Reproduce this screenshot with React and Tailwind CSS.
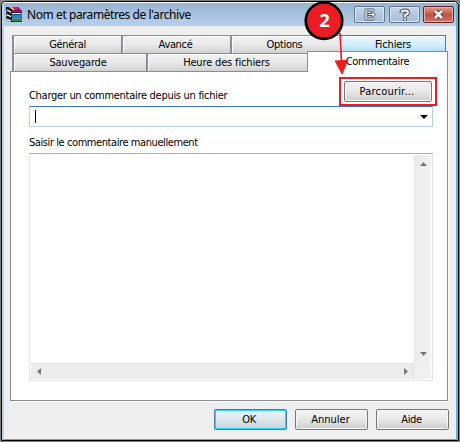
import React from "react";

const face = "border border-[#777] rounded-[2px] bg-linear-to-b from-[#f3f3f3] via-[#e7e7e7] via-50% to-[#cecece] shadow-[inset_0_0_0_1px_#f7f7f7]";
const tab = "flex items-center justify-center border-l-2 border-t border-[#8b8c96] bg-linear-to-b from-[#f2f2f2] via-[#e9e9e9] to-[#d2d2d2] shadow-[inset_1px_1px_0_#fff] shrink-0";
const caption = "flex h-[17px] items-center justify-center rounded-[2px] border border-[#63758f] shadow-[inset_0_0_0_1px_#dce7f4] bg-linear-to-b from-[#c3d4e8] via-[#b4c8e0] via-45% to-[#a7bed9]";

function Books() {
  return (
    <svg width="17" height="17" viewBox="0 0 17 17" className="mt-px shrink-0">
      <path d="M0 1h12l4 4v2l-1 1 1 2v2l-1 1 1 1v2H5l-4-2-1-3 1-1-1-3 1-1-1-2z" fill="#101018" />
      <path d="M2 1h10l3 3H6z" fill="#c4157f" />
      <path d="M6 4.200h10v2.100H6z" fill="#9c1b68" />
      <path d="M3 1h3l3 3H7z" fill="#d8c83a" />
      <path d="M1 3l4 2.500v1.400L1 4.400zM1 8l4 2v1.400L1 9.400zM1 12.500l4 1.700v1.400l-4-1.700z" fill="#f4f4f4" />
      <path d="M6 7h9v1H6zM6 11.600h9v.9H6z" fill="#e4e4e4" />
      <path d="M5 8.500h11v2.500H6z" fill="#1787cc" />
      <path d="M5 13h11v2.300H6z" fill="#129a4e" />
    </svg>
  );
}

function Arrow({ d, className = "" }) {
  return (
    <svg width="9" height="9" viewBox="0 0 9 9" className={className}>
      <path d={d} fill="#777" />
    </svg>
  );
}

export default function App() {
  return (
    <div className="relative h-[442px] w-[460px] overflow-hidden bg-[#808080] p-px font-['DejaVu_Sans_Condensed','DejaVu_Sans',sans-serif] text-[11px] leading-[14px] tracking-[-0.34px] text-black [font-stretch:condensed]">
      <div className="h-[440px] w-[458px] rounded-t-[5px] border border-black bg-[#efefef]">
        <div className="flex h-[438px] flex-col overflow-hidden rounded-t-[4px] border-t border-r-2 border-b border-l-2 border-t-white border-r-[#49bce3] border-b-[#32bfe0] border-l-[#bdd3e9]">
          <header className="flex h-[23px] shrink-0 bg-linear-to-b from-[#98b4d2] to-[#b8d0eb] pl-[2px]">
            <div className="pt-[2px]"><Books /></div>
            <h1 className="ml-1 w-[260px] whitespace-nowrap pt-[4px] font-['Noto_Sans',sans-serif] text-[12px] leading-[15px] tracking-[-0.42px] [font-stretch:normal]">Nom et paramètres de l'archive</h1>
            <div className="ml-auto mr-[2px] flex gap-[4px] pt-[3px]">
              <div className={caption + " w-[31px]"}>
                <svg width="14" height="13" viewBox="0 0 14 13" fill="none" strokeLinejoin="round">
                  <path d="M10 3.500V2H3v9h7V9.500" stroke="#4f5b6b" strokeWidth="2.800" />
                  <path d="M10 3.500V2H3v9h7V9.500" stroke="#fff" strokeWidth="1.200" />
                  <path d="M5 5.500h4v-2l3.500 3-3.500 3v-2H5z" fill="#fff" stroke="#4f5b6b" />
                </svg>
              </div>
              <div className={caption + " w-[31px]"}>
                <svg width="12" height="14" viewBox="0 0 12 14" fill="none">
                  <path d="M2.500 5V4Q3 2.500 6 2.500t3 2Q9 6.500 6 7v2.500M6 10.500v2.500" stroke="#465160" strokeWidth="3.800" />
                  <path d="M2.500 4.500V4Q3 2.500 6 2.500t3 2Q9 6.500 6 7v2M6 10.800v1.600" stroke="#fff" strokeWidth="1.800" />
                </svg>
              </div>
              <div className="-ml-px flex h-[17px] w-[31px] items-center justify-center rounded-[2px] border border-[#6b2020] bg-linear-to-b from-[#dda093] via-[#c55042] via-50% to-[#cc7463] shadow-[inset_0_0_0_1px_#e5b2a8]">
                <svg width="13" height="11" viewBox="0 0 13 11" fill="none">
                  <path d="M3 2l7 7M10 2L3 9" stroke="#594145" strokeWidth="4.600" />
                  <path d="M3 2l7 7M10 2L3 9" stroke="#fff" strokeWidth="2.600" />
                </svg>
              </div>
            </div>
          </header>

          <main className="pt-[9px] pl-[6px]">
            <nav className="w-[438px] pl-[2px]">
              <div className="flex h-[18px]">
                <div className={tab + " w-[109px]"}>Général</div>
                <div className={tab + " w-[109px] pr-[2px]"}>Avancé</div>
                <div className={tab + " w-[109px] pr-[2px]"}>Options</div>
                <div className="flex w-[107px] items-center justify-center border-t border-r border-[#3f7fa9] bg-linear-to-b from-[#e9f6fd] via-[#d5effc] to-[#a8daf3] pl-[2px] tracking-[-0.15px] shadow-[inset_1px_1px_0_#fff]">Fichiers</div>
              </div>
              <div className="flex h-[18px]">
                <div className={tab + " w-[134px] pr-[4px] tracking-[-0.2px]"}>Sauvegarde</div>
                <div className={tab + " w-[161px] pr-[2px] tracking-[-0.16px]"}>Heure des fichiers</div>
                <div className="relative z-10 -mt-[2px] h-[21px] w-[141px] border-x border-t border-[#8b8c96] bg-white pt-[3px] text-center">Commentaire</div>
              </div>
            </nav>
            <section className="h-[330px] w-[438px] border border-[#8b8c96] bg-white pl-[18px] shadow-[1px_1px_0_#fff]">
              <div className="flex h-[34px] w-[408px] justify-between">
                <label className="pt-[17px] whitespace-nowrap tracking-[-0.29px]">Charger un commentaire depuis un fichier</label>
                <div className="relative z-10 mt-[5px] h-[29px] w-[98px] shrink-0 border-2 border-[#ed1c24] px-[3px] pt-[2px]">
                  <button className={face + " block h-[21px] w-[88px] pr-[2px] tracking-[0.2px]"}>Parcourir...</button>
                </div>
              </div>
              <div className="flex h-[21px] w-[404px] items-center rounded-[1px] border border-[#b5d6e8] border-t-[#367dad] pl-[5px]">
                <i className="h-[13px] w-px bg-black" />
                <svg className="mr-[4px] ml-auto" width="8" height="4" viewBox="0 0 8 4"><path d="M0 0h8L4 4z" /></svg>
              </div>
              <div className="h-[26px] pt-[9px] tracking-[-0.42px]">Saisir le commentaire manuellement</div>
              <div className="flex h-[228px] w-[404px] flex-col border border-[#e1e4eb] border-t-[#abadb3] p-px">
                <div className="flex h-[208px]">
                  <div className="flex-1" />
                  <div className="flex w-[17px] flex-col items-center justify-between border-l border-[#e5e5e5] bg-linear-to-r from-[#ebebeb] to-[#f2f2f2] pt-[4px] pb-[4px]">
                    <Arrow d="M1 7L4.500 3 8 7z" />
                    <Arrow d="M1 2h7L4.500 6z" />
                  </div>
                </div>
                <div className="flex h-[16px] bg-[#eee]">
                  <div className="flex flex-1 items-center justify-between border-t border-r border-[#e2e2e2] bg-[#ececec] pr-[3px] pl-[3px]">
                    <Arrow d="M7 1v7L3 4.500z" />
                    <Arrow d="M3 1v7l4-3.500z" />
                  </div>
                  <div className="w-[17px] bg-[#f0f0f0]" />
                </div>
              </div>
            </section>
            <footer className="flex gap-[8px] pt-[8px] pl-[204px]">
              <button className="h-[21px] w-[73px] rounded-[2px] border border-[#3c7fb1] bg-linear-to-b from-[#edf3f6] via-[#dce7ed] to-[#c1d5df] pr-[3px] shadow-[inset_0_0_0_1px_#30d3f7]">OK</button>
              <button className={face + " h-[21px] w-[73px] pr-[2px] tracking-[0px]"}>Annuler</button>
              <button className={face + " h-[21px] w-[73px] pr-[2px]"}>Aide</button>
            </footer>
          </main>
        </div>
      </div>

      <svg className="absolute top-0 left-[300px] z-20" width="60" height="80" viewBox="0 0 60 80">
        <path d="M40 33l1.500 29" stroke="#ed1c24" strokeWidth="1.700" />
        <path d="M34.500 60.500l14-.7L42 75z" fill="#ed1c24" />
        <circle cx="24" cy="20.700" r="18.200" fill="#ed1c24" stroke="#000" strokeWidth="2.700" />
        <text x="24.300" y="27" textAnchor="middle" fill="white" fontFamily="Noto Sans, sans-serif" fontSize="18.500" fontWeight="700">2</text>
      </svg>
    </div>
  );
}
